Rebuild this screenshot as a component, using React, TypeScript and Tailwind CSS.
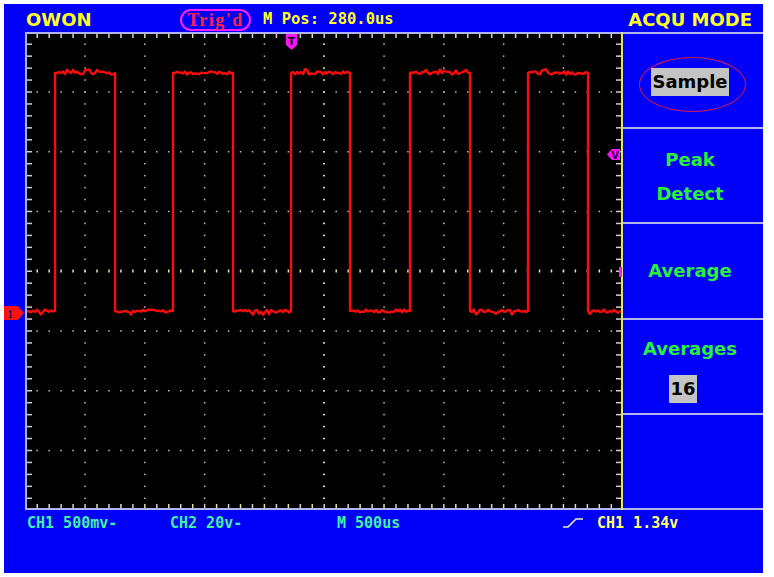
import React from "react";

const W = 598;
const H = 478;
const DX = W / 10;
const DY = H / 8;
const STEP_X = DX / 5;
const STEP_Y = DY / 5;

function rng(seed: number) {
  let s = seed;
  return () => {
    s = (s * 1103515245 + 12345) % 2147483648;
    return s / 2147483648;
  };
}

// square wave with a bit of noise on the flat parts
function wavePath() {
  const r = rng(11);
  const edges = [30, 90, 148, 208, 266, 325, 385, 445, 503, 563];
  const HI = 41;
  const LO = 279;
  const pts = [2, ...edges, W - 2];
  let d = `M2 ${LO}`;
  for (let i = 0; i < pts.length - 1; i++) {
    const a = pts[i];
    const b = pts[i + 1];
    const base = i % 2 === 0 ? LO : HI;
    for (let x = a + 2; x < b - 1; x += 2) {
      let n = (r() - 0.5) * 3;
      if (r() < 0.1) n += base === HI ? -2.5 : 2.5;
      d += ` L${x} ${(base + n).toFixed(1)}`;
    }
    d += ` L${b} ${base}`;
    if (i < pts.length - 2) d += ` L${b} ${i % 2 === 0 ? HI : LO}`;
  }
  return d;
}

const WAVE = wavePath();

function Screen() {
  const dots: React.ReactNode[] = [];
  for (let k = 1; k < 10; k++) {
    if (k === 5) continue;
    for (let j = 1; j < 40; j++) {
      dots.push(<rect key={`v${k}-${j}`} x={k * DX - 0.5} y={j * STEP_Y - 0.5} width={1.5} height={1.5} fill="#c0c0c0" />);
    }
  }
  for (let k = 1; k < 8; k++) {
    if (k === 4) continue;
    for (let i = 1; i < 50; i++) {
      dots.push(<rect key={`h${k}-${i}`} x={i * STEP_X - 0.5} y={k * DY - 0.5} width={1.5} height={1.5} fill="#c0c0c0" />);
    }
  }
  // center lines with small ticks
  for (let i = 1; i < 50; i++) {
    dots.push(<rect key={`cx${i}`} x={i * STEP_X - 0.5} y={H / 2 - 1.5} width={1.5} height={3} fill="#e8e8b0" />);
  }
  for (let j = 1; j < 40; j++) {
    dots.push(<rect key={`cy${j}`} x={W / 2 - 1} y={j * STEP_Y - 0.5} width={2} height={1.5} fill="#e0e0b0" />);
  }
  // border ticks
  for (let i = 1; i < 50; i++) {
    const c = i % 2 === 0 ? "#e0e0a0" : "#d0d0d0";
    dots.push(<rect key={`tt${i}`} x={i * STEP_X - 0.5} y={2} width={1.5} height={4} fill={c} />);
    dots.push(<rect key={`tb${i}`} x={i * STEP_X - 0.5} y={H - 6} width={1.5} height={4} fill={c} />);
  }
  for (let j = 1; j < 40; j++) {
    dots.push(<rect key={`tl${j}`} x={2} y={j * STEP_Y - 0.5} width={5} height={1.5} fill="#d0d0d0" />);
    dots.push(<rect key={`tr${j}`} x={W - 7} y={j * STEP_Y - 0.5} width={5} height={1.5} fill="#d0d0d0" />);
  }

  return (
    <svg width={W} height={H} className="block shrink-0 bg-black">
      {dots}
      <path d={WAVE} fill="none" stroke="#ff0a0a" strokeWidth={2.4} strokeLinejoin="round" />
      {/* borders */}
      <rect x={0} y={0} width={W} height={2} fill="#b4b4ec" />
      <rect x={0} y={H - 2} width={W} height={2} fill="#b4b4ec" />
      <rect x={0} y={0} width={2} height={H} fill="#b4b4ec" />
      <rect x={W - 2} y={0} width={2} height={H} fill="#e4e468" />
      {/* trigger position marker */}
      <polygon points="261,2 272,2 272,13 266.5,18 261,13" fill="#ff14ff" />
      <text x={266.5} y={13} textAnchor="middle" fontSize={11} fontWeight={700} fontFamily="DejaVu Sans, sans-serif" fill="#200020">T</text>
      {/* trigger level marker */}
      <polygon points="582,122.5 587,117 595,117 595,128 587,128" fill="#ff14ff" />
      <text x={590} y={126.5} textAnchor="middle" fontSize={10} fontWeight={700} fontFamily="DejaVu Sans, sans-serif" fill="#300040">V</text>
      <rect x={594} y={235} width={3} height={10} fill="#ff14ff" />
    </svg>
  );
}

function MenuItem({ children, last }: { children: React.ReactNode; last?: boolean }) {
  return (
    <div className={`relative flex-1 flex flex-col items-center justify-center pr-[6px] ${last ? "" : "border-b-2 border-[#b4b4ec]"}`}>
      {children}
    </div>
  );
}

const sans = "font-['DejaVu_Sans',sans-serif] font-bold text-[18px]";
const mono = "font-['DejaVu_Sans_Mono',monospace] font-bold";

function Menu() {
  return (
    <div className={`w-[140px] flex flex-col border-t-2 border-b-2 border-[#b4b4ec] ${sans}`}>
      <MenuItem>
        <span className="mt-[3px] bg-[#c4c4c4] text-black leading-[22px] py-[3px] px-[1px]">Sample</span>
        <div className="absolute left-[16px] top-[23px] w-[107px] h-[55px] rounded-[50%] border border-[#d81850]" />
      </MenuItem>
      <MenuItem>
        <span className="mt-[3px] text-[#2af03a] leading-[34px]">Peak</span>
        <span className="text-[#2af03a] leading-[34px]">Detect</span>
      </MenuItem>
      <MenuItem>
        <span className="text-[#2af03a] leading-[22px]">Average</span>
      </MenuItem>
      <MenuItem>
        <span className="mt-[8px] text-[#2af03a] leading-[22px]">Averages</span>
        <span className="mt-[15px] mr-[14px] bg-[#c4c4c4] text-black leading-[22px] py-[3px] px-[1px]">16</span>
      </MenuItem>
      <MenuItem last>
        <span />
      </MenuItem>
    </div>
  );
}

export default function App() {
  return (
    <div className="w-[774px] h-[577px] bg-white p-[4px]">
      <div className="w-[759px] h-[569px] bg-[#0000fa] flex flex-col">
        <div className="h-[28px] flex items-center pt-[3px] pl-[22px] pr-[11px]">
          <span className={`w-[154px] text-[#ffff1e] ${sans} leading-none`}>OWON</span>
          <span className="w-[71px] h-[22px] flex items-center justify-center rounded-full border-2 border-[#ff20ff] font-['Liberation_Serif',serif] font-bold text-[18px] tracking-[1.5px] text-[#ff2040] leading-none">
            Trig'd
          </span>
          <span className={`ml-[12px] text-[#ffff1e] text-[15.5px] ${mono} leading-none`}>M Pos: 280.0us</span>
          <span className={`ml-auto text-[#ffff1e] ${sans} leading-none`}>ACQU MODE</span>
        </div>
        <div className="flex h-[478px]">
          <div className="relative w-[21px]">
            <svg width={21} height={14} className="absolute left-0 top-[274px]">
              <polygon points="0,0 14,0 20,7 14,14 0,14" fill="#ff1010" />
              <text x={6} y={11.5} textAnchor="middle" fontSize={12} fontWeight={700} fontFamily="Liberation Serif, serif" fill="#301060">1</text>
            </svg>
          </div>
          <Screen />
          <Menu />
        </div>
        <div className={`flex-1 flex items-start pt-[4px] pl-[23px] text-[15px] leading-[18px] ${mono}`}>
          <span className="w-[143px] text-[#40f0a8]">CH1 500mv-</span>
          <span className="w-[167px] text-[#40f0a8]">CH2 20v-</span>
          <span className="w-[226px] text-[#40f0a8]">M 500us</span>
          <span className="w-[34px] pt-[4px]">
            <svg width={21} height={10} className="block">
              <path d="M0 9 L5 9 L13 1 L20 1" fill="none" stroke="#f0f0c0" strokeWidth={1.6} />
            </svg>
          </span>
          <span className="text-[#ffff70]">CH1 1.34v</span>
        </div>
      </div>
    </div>
  );
}
